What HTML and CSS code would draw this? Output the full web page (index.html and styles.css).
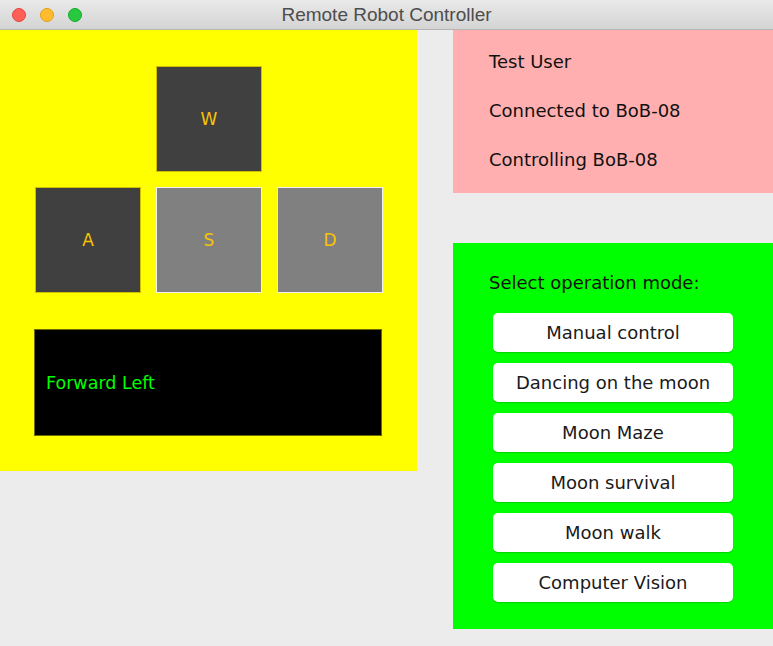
FILE: index.html
```html
<!DOCTYPE html>
<html>
<head>
<meta charset="utf-8">
<link rel="stylesheet" href="styles.css">
</head>
<body>
<div class="window">
  <div class="titlebar">
    <div class="lights">
      <span class="dot dot-red"></span>
      <span class="dot dot-yellow"></span>
      <span class="dot dot-green"></span>
    </div>
    <div class="title">Remote Robot Controller</div>
  </div>
  <div class="content">
    <div class="left">
      <div class="keys">
        <div class="key key-dark k-w">W</div>
        <div class="key key-dark k-a">A</div>
        <div class="key key-grey k-s">S</div>
        <div class="key key-grey k-d">D</div>
      </div>
      <div class="status">Forward Left</div>
    </div>
    <div class="right">
      <div class="info">
        <div class="info-line">Test User</div>
        <div class="info-line">Connected to BoB-08</div>
        <div class="info-line">Controlling BoB-08</div>
      </div>
      <div class="modes">
        <div class="modes-label">Select operation mode:</div>
        <div class="mode-list">
          <button class="mode">Manual control</button>
          <button class="mode">Dancing on the moon</button>
          <button class="mode">Moon Maze</button>
          <button class="mode">Moon survival</button>
          <button class="mode">Moon walk</button>
          <button class="mode">Computer Vision</button>
        </div>
      </div>
    </div>
  </div>
</div>
</body>
</html>
```
FILE: styles.css
```css
html, body {
  margin: 0;
  padding: 0;
  background: #ececec;
}
.window {
  width: 773px;
  height: 646px;
  overflow: hidden;
  background: #ececec;
  font-family: "DejaVu Sans", sans-serif;
}
.titlebar {
  height: 29px;
  border-bottom: 1px solid #b4b4b4;
  background: linear-gradient(#e9e9e9, #d4d4d4);
  display: flex;
  align-items: center;
  justify-content: center;
  position: relative;
}
.lights {
  position: absolute;
  left: 12px;
  top: 8px;
  display: flex;
  gap: 14px;
}
.dot {
  width: 14px;
  height: 14px;
  border-radius: 50%;
  box-sizing: border-box;
}
.dot-red { background: #fe5f57; border: 1px solid #e2463f; }
.dot-yellow { background: #febc2e; border: 1px solid #e1a116; }
.dot-green { background: #28c840; border: 1px solid #12ac28; }
.title {
  font-family: "Liberation Sans", Arial, sans-serif;
  font-size: 19px;
  color: #4d4d4d;
}
.content {
  display: flex;
  gap: 36px;
}
.left {
  width: 417px;
  height: 441px;
  background: #ffff00;
  box-sizing: border-box;
  padding: 36px 0 0 34px;
}
.keys {
  display: grid;
  grid-template-columns: repeat(3, 106px);
  grid-auto-rows: 106px;
  gap: 15px;
  margin-left: 1px;
}
.key {
  display: flex;
  align-items: center;
  justify-content: center;
  font-size: 17px;
  color: #f8c300;
  box-sizing: border-box;
}
.key-dark {
  background: #404040;
  border: 1px solid #d2be00;
}
.key-grey {
  background: #808080;
  border: 1px solid #f2f2f2;
}
.k-w { grid-column: 2; grid-row: 1; }
.k-a { grid-column: 1; grid-row: 2; }
.k-s { grid-column: 2; grid-row: 2; }
.k-d { grid-column: 3; grid-row: 2; }
.status {
  margin-top: 36px;
  width: 348px;
  height: 107px;
  box-sizing: border-box;
  background: #000;
  border: 1px solid #6b6b00;
  color: #00ff00;
  font-size: 17.5px;
  display: flex;
  align-items: center;
  padding: 0 0 0 11px;
}
.right {
  width: 320px;
  display: flex;
  flex-direction: column;
  gap: 50px;
}
.info {
  height: 163px;
  background: #ffafaf;
  box-sizing: border-box;
  padding: 21px 0 0 36px;
  display: flex;
  flex-direction: column;
  gap: 27px;
}
.info-line {
  font-size: 18px;
  line-height: 22px;
  color: #111;
}
.modes {
  height: 386px;
  background: #00ff00;
  box-sizing: border-box;
  padding: 29px 0 0 36px;
}
.modes-label {
  font-size: 18px;
  line-height: 22px;
  color: #111;
}
.mode-list {
  margin-top: 19px;
  margin-left: 4px;
  display: flex;
  flex-direction: column;
  gap: 11px;
}
.mode {
  width: 240px;
  height: 39px;
  border: none;
  border-radius: 5px;
  background: #fff;
  box-shadow: 0 1px 1px rgba(0,0,0,0.18);
  font-family: "DejaVu Sans", sans-serif;
  font-size: 18px;
  color: #1a1a1a;
  padding: 0;
}
```
